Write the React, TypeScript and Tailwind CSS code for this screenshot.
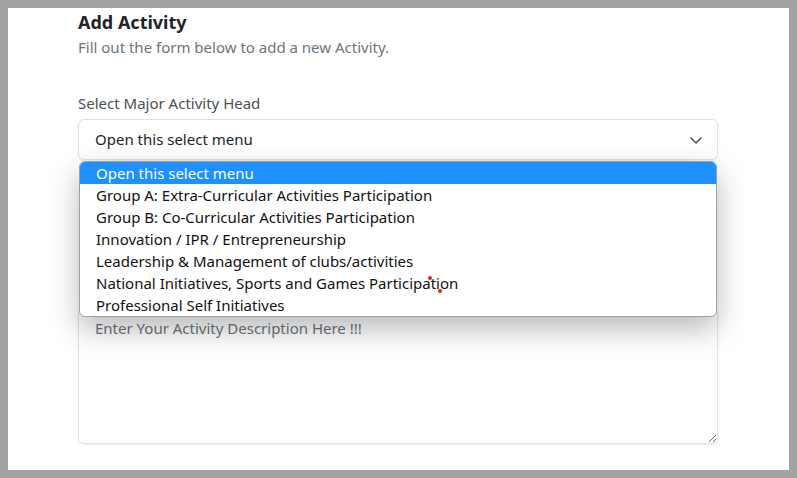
import React from "react";

const options = [
  "Open this select menu",
  "Group A: Extra-Curricular Activities Participation",
  "Group B: Co-Curricular Activities Participation",
  "Innovation / IPR / Entrepreneurship",
  "Leadership & Management of clubs/activities",
  "National Initiatives, Sports and Games Participation",
  "Professional Self Initiatives",
];

export default function App() {
  return (
    <div
      className="w-[797px] h-[478px] bg-[#a3a3a3] p-2 overflow-hidden"
      style={{ fontFamily: '"Noto Sans", "Open Sans", sans-serif' }}
    >
      <div className="h-full bg-white pl-[70px] pt-[1px]">
        <div className="w-[640px]">
          <h2 className="text-[18px] leading-[26px] font-bold text-[#212529]">Add Activity</h2>
          <p className="text-[15px] leading-[22px] text-[#6c757d] mt-[1px]">
            Fill out the form below to add a new Activity.
          </p>
          <div className="mt-[34px]">
            <label className="block text-[15px] leading-[22px] text-[#495057] mb-[5px]">
              Select Major Activity Head
            </label>
            <div className="relative">
              <div className="h-[41px] rounded-[6px] border border-[#dee2e6] bg-white flex items-center justify-between pl-4 pr-[14px] shadow-[0_1px_2px_rgba(0,0,0,0.08)]">
                <span className="text-[15px] text-[#212529]">Open this select menu</span>
                <svg width="14" height="10" viewBox="0 0 14 10" fill="none">
                  <path d="M2 3l5 5 5-5" stroke="#4b5563" strokeWidth="1.6" strokeLinecap="round" strokeLinejoin="round" />
                </svg>
              </div>
              <div className="absolute left-px right-px top-[42px] z-10 bg-white border border-[#a0a0a0] rounded-[6px] overflow-hidden shadow-[0_12px_30px_rgba(0,0,0,0.28)]">
                {options.map((o, i) => (
                  <div
                    key={o}
                    className={
                      "h-[22px] leading-[22px] pl-4 text-[15px] whitespace-nowrap " +
                      (i === 0 ? "bg-[#1e90ff] text-white" : "text-[#111111]")
                    }
                  >
                    {o}
                  </div>
                ))}
              </div>
              <div className="absolute left-[350px] top-[157px] z-20 w-[4px] h-[4px] rounded-full bg-[#e32222]" />
              <div className="absolute left-[360px] top-[170px] z-20 w-[4px] h-[4px] rounded-full bg-[#e32222]" />
            </div>
            <div className="mt-[148px]">
              <textarea
                className="block w-full h-[136px] rounded-[6px] border border-[#dee2e6] px-4 pt-[7px] text-[15px] leading-[24px] text-[#212529] placeholder:text-[#6c757d] outline-none shadow-[0_1px_2px_rgba(0,0,0,0.08)]"
                placeholder="Enter Your Activity Description Here !!!"
              />
            </div>
          </div>
        </div>
      </div>
    </div>
  );
}
